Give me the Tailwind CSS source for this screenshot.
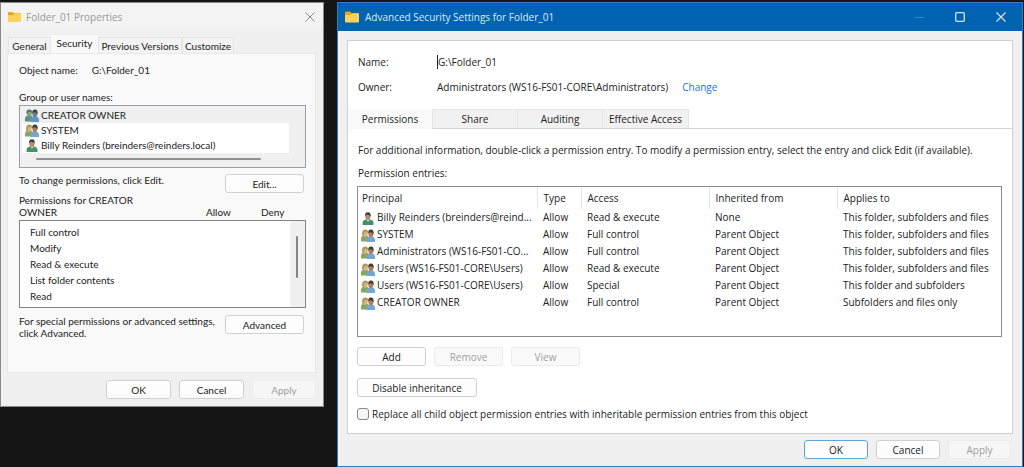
<!DOCTYPE html>
<html lang="en">
  <head>
    <meta charset="UTF-8" />
    <meta name="viewport" content="width=device-width, initial-scale=1.0" />
    <title>Advanced Security Settings for Folder_01</title>
    <script src="https://cdn.jsdelivr.net/npm/@tailwindcss/browser@4"></script>
  </head>
  <body class="bg-[#151515] min-h-screen text-[#222]">
    <!-- Shared icons -->
    <svg class="hidden">
      <symbol id="folder" viewBox="0 0 14 12">
        <path d="M0 1.5Q0 .5 1 .5H5L6.5 2H13Q14 2 14 3V6H0Z" fill="#e8a61e" />
        <path d="M0 4H5.2L6.8 2.6H13Q14 2.6 14 3.6V10.5Q14 11.5 13 11.5H1Q0 11.5 0 10.5Z" fill="#ffd35b" />
      </symbol>
      <symbol id="user" viewBox="0 0 12 13">
        <path d="M.6 13V10.5Q.8 8.3 4 7.6H8Q11.2 8.3 11.5 10.5V13Z" fill="#43906f" />
        <path d="M4.4 7.4 6 9.8 7.8 7.4Z" fill="#d8e8df" />
        <ellipse cx="5.9" cy="4.6" rx="2.6" ry="3.5" fill="#b98a68" />
        <path d="M3.2 4.4Q2.6.2 6 .2 9.3.4 8.6 4.4 7.5 2.6 5 2.8 3.8 3 3.2 4.4Z" fill="#33423b" />
      </symbol>
      <symbol id="users" viewBox="0 0 14 13">
        <path d="M0 12.4V9.2Q.2 7.2 2.6 6.8H6Q8 7.2 8 9.2V12.4Z" fill="#86a65c" />
        <ellipse cx="4.2" cy="4.4" rx="2.5" ry="3.4" fill="#d5b184" />
        <path d="M1.2 6.8Q.4.4 4.2.4 7.7.4 6.9 4.2 5.6 2.2 3.6 3 2.3 4 2.6 7Z" fill="#a39c5c" />
        <path d="M5.4 13V10.2Q5.8 8 8.4 7.4H11.4Q13.8 8 14 10.2V13Z" fill="#75a5d5" />
        <ellipse cx="9.9" cy="4.8" rx="2.5" ry="3.4" fill="#ad7d5c" />
        <path d="M7.3 4.7Q6.8.5 10 .5 13.2.6 12.5 5.2 11.2 3 9.2 3.2 8.1 3.4 7.3 4.7Z" fill="#443a36" />
      </symbol>
      <symbol id="owner" viewBox="0 0 14 13">
        <path d="M0 12.4V9.2Q.2 7.2 2.6 6.8H6Q8 7.2 8 9.2V12.4Z" fill="#559477" />
        <ellipse cx="4.2" cy="4.4" rx="2.5" ry="3.4" fill="#87a08a" />
        <path d="M1.5 5Q.7.4 4.2.4 7.7.4 6.9 4.2 5.6 2.2 3.6 3 2.3 3.5 1.5 5Z" fill="#52765f" />
        <path d="M5.4 13V10.2Q5.8 8 8.4 7.4H11.4Q13.8 8 14 10.2V13Z" fill="#5b96cc" />
        <ellipse cx="9.9" cy="4.8" rx="2.5" ry="3.4" fill="#6f7d88" />
        <path d="M7.3 4.7Q6.8.5 10 .5 13.2.6 12.5 5.2 11.2 3 9.2 3.2 8.1 3.4 7.3 4.7Z" fill="#2e4454" />
      </symbol>
    </svg>

    <main class="flex items-start gap-[13px] pt-[2px] pr-[1px]">
      <!-- Folder properties -->
      <section class="w-[324px] shrink-0 border border-[#8a8a8a] bg-[#f0f0f0] font-['Lato',sans-serif] text-[10px] leading-[12px]">
        <header class="flex h-[27px] items-center bg-[#f3f3f3] pl-[7px] pr-[8px]">
          <svg class="h-[12px] w-[13px]"><use href="#folder" /></svg>
          <h2 class="ml-[5px] flex-1 font-['Open_Sans',sans-serif] text-[10px] text-[#999]">Folder_01 Properties</h2>
          <button aria-label="Close" class="text-[#8a8a8a]">
            <svg class="h-[10px] w-[10px]" viewBox="0 0 10 10" fill="none" stroke="currentColor"><path d="M.5 .5 9.5 9.5M9.5 .5 .5 9.5" /></svg>
          </button>
        </header>

        <nav class="mt-[7px] flex h-[16px] items-end pl-[7px]">
          <button class="h-[16px] w-[43px] border border-b-0 border-[#e5e5e5] bg-[#f3f3f3]">General</button>
          <button class="h-[18px] w-[47px] bg-[#f9f9f9] pb-[3px]">Security</button>
          <button class="h-[16px] w-[84px] border border-b-0 border-[#e5e5e5] bg-[#f3f3f3]">Previous Versions</button>
          <button class="h-[16px] w-[52px] border border-b-0 border-[#e5e5e5] bg-[#f3f3f3]">Customize</button>
        </nav>

        <div class="ml-[6px] mr-[7px] h-[320px] border border-[#e8e8e8] bg-[#f9f9f9] pl-[11px] pr-[9px] pt-[10px]">
          <p class="flex gap-[14px]"><span>Object name:</span><span>G:\Folder_01</span></p>
          <p class="mt-[15px]">Group or user names:</p>
          <div class="mt-[2px] h-[63px] border border-[#9aa0a8] bg-[#f0f0f0] pl-[2px] pr-[16px] pt-[2px]">
            <ul class="bg-white leading-[15px]">
              <li class="flex items-center bg-[#f0f0f0] pl-[3px]"><svg class="mr-[2px] h-[13px] w-[14px]"><use href="#owner" /></svg>CREATOR OWNER</li>
              <li class="flex items-center pl-[3px]"><svg class="mr-[2px] h-[13px] w-[14px]"><use href="#users" /></svg>SYSTEM</li>
              <li class="flex items-center pl-[3px]"><svg class="mr-[2px] h-[13px] w-[14px]"><use href="#user" /></svg>Billy Reinders (breinders@reinders.local)</li>
            </ul>
            <div class="ml-[14px] mr-[28px] mt-[5px] h-[2px] rounded-full bg-[#909090]"></div>
          </div>
          <div class="mt-[6px] flex items-start justify-between pr-[2px]">
            <p>To change permissions, click Edit.</p>
            <button class="h-[19px] w-[79px] rounded-[3px] border border-[#d0d0d0] bg-[#fdfdfd]">Edit...</button>
          </div>
          <div class="mt-[1px] flex items-end">
            <p class="w-[187px]">Permissions for CREATOR<br />OWNER</p>
            <p class="w-[55px]">Allow</p>
            <p>Deny</p>
          </div>
          <div class="mt-[2px] flex h-[88px] justify-between border border-[#858585] bg-white">
            <ul class="pl-[10px] pt-[3px] leading-[16px]">
              <li>Full control</li>
              <li>Modify</li>
              <li>Read &amp; execute</li>
              <li>List folder contents</li>
              <li>Read</li>
            </ul>
            <div class="w-[15px] bg-[#f0f0f0] pl-[6px] pt-[15px]">
              <div class="h-[42px] w-[2px] rounded-full bg-[#858585]"></div>
            </div>
          </div>
          <div class="mt-[7px] flex items-start justify-between pr-[2px]">
            <p>For special permissions or advanced settings,<br />click Advanced.</p>
            <button class="h-[19px] w-[79px] shrink-0 rounded-[3px] border border-[#d0d0d0] bg-[#fdfdfd]">Advanced</button>
          </div>
        </div>

        <footer class="flex justify-end gap-[8px] pb-[7px] pr-[7px] pt-[7px]">
          <button class="h-[19px] w-[65px] rounded-[3px] border border-[#d0d0d0] bg-[#fdfdfd]">OK</button>
          <button class="h-[19px] w-[65px] rounded-[3px] border border-[#d0d0d0] bg-[#fdfdfd]">Cancel</button>
          <button disabled class="h-[19px] w-[64px] rounded-[3px] border border-[#ececec] bg-[#f6f6f6] text-[#a0a0a0]">Apply</button>
        </footer>
      </section>

      <!-- Advanced security settings -->
      <section class="min-w-0 flex-1 border border-[#2f7fc0] bg-[#f0f0f0] font-['Open_Sans',sans-serif] text-[10px] leading-[16px]">
        <header class="flex h-[28px] items-center bg-[#0063b1] pl-[7px] pr-[16px] text-white">
          <svg class="h-[12px] w-[14px]"><use href="#folder" /></svg>
          <h1 class="ml-[6px] flex-1 text-[#dbe9f5]">Advanced Security Settings for Folder_01</h1>
          <div class="flex items-center gap-[31px]">
            <button aria-label="Minimize" disabled class="text-[#3d88c6]"><svg class="h-[10px] w-[10px]" viewBox="0 0 10 10" stroke="currentColor"><path d="M.5 5.5H9.5" /></svg></button>
            <button aria-label="Maximize" class="text-[#d5e5f3]"><svg class="h-[10px] w-[10px]" viewBox="0 0 10 10" fill="none" stroke="currentColor"><rect x=".7" y=".7" width="8.6" height="8.6" rx="1" stroke-width="1.3" /></svg></button>
            <button aria-label="Close" class="text-[#d5e5f3]"><svg class="h-[10px] w-[10px]" viewBox="0 0 10 10" fill="none" stroke="currentColor"><path d="M.5 .5 9.5 9.5M9.5 .5 .5 9.5" stroke-width="1.2" /></svg></button>
          </div>
        </header>

        <div class="mx-[9px] mt-[9px] h-[394px] border border-[#cfcfcf] bg-white">
          <dl class="grid grid-cols-[79px_1fr] gap-y-[9px] pl-[10px] pt-[13px]">
            <dt>Name:</dt>
            <dd><span class="border-l border-[#222]">G:\Folder_01</span></dd>
            <dt>Owner:</dt>
            <dd>Administrators (WS16-FS01-CORE\Administrators)<a href="#" class="ml-[14px] text-[#1a73d6]">Change</a></dd>
          </dl>

          <nav class="mt-[14px] flex h-[20px] border-b border-[#d5d5d5]">
            <button class="h-[20px] w-[85px] border-r border-[#e5e5e5] bg-[#f9f9f9]">Permissions</button>
            <button class="w-[85px] border-r border-t border-[#e5e5e5] bg-[#f1f1f1]">Share</button>
            <button class="w-[85px] border-r border-t border-[#e5e5e5] bg-[#f1f1f1]">Auditing</button>
            <button class="w-[86px] border-r border-t border-[#e5e5e5] bg-[#f1f1f1]">Effective Access</button>
          </nav>

          <div class="pl-[9px] pr-[10px]">
            <p class="mt-[13px] pl-[1px]">For additional information, double-click a permission entry. To modify a permission entry, select the entry and click Edit (if available).</p>
            <p class="mt-[7px] pl-[1px]">Permission entries:</p>

            <div class="mt-[5px] h-[151px] border border-[#8c8c8c]">
              <table class="w-full table-fixed text-left leading-[17px]">
                <colgroup>
                  <col class="w-[179px]" />
                  <col class="w-[44px]" />
                  <col class="w-[128px]" />
                  <col class="w-[128px]" />
                  <col />
                </colgroup>
                <thead>
                  <tr class="h-[22px]">
                    <th class="border-r border-[#e5e5e5] pl-[4px] font-normal">Principal</th>
                    <th class="border-r border-[#e5e5e5] pl-[6px] font-normal">Type</th>
                    <th class="border-r border-[#e5e5e5] pl-[6px] font-normal">Access</th>
                    <th class="border-r border-[#e5e5e5] pl-[6px] font-normal">Inherited from</th>
                    <th class="pl-[6px] font-normal">Applies to</th>
                  </tr>
                </thead>
                <tbody>
                  <tr>
                    <td class="whitespace-nowrap pl-[3px]"><svg class="mr-[2px] inline h-[13px] w-[14px] align-middle"><use href="#user" /></svg>Billy Reinders (breinders@reind...</td>
                    <td class="pl-[6px]">Allow</td>
                    <td class="pl-[6px]">Read &amp; execute</td>
                    <td class="pl-[6px]">None</td>
                    <td class="pl-[6px]">This folder, subfolders and files</td>
                  </tr>
                  <tr>
                    <td class="whitespace-nowrap pl-[3px]"><svg class="mr-[2px] inline h-[13px] w-[14px] align-middle"><use href="#users" /></svg>SYSTEM</td>
                    <td class="pl-[6px]">Allow</td>
                    <td class="pl-[6px]">Full control</td>
                    <td class="pl-[6px]">Parent Object</td>
                    <td class="pl-[6px]">This folder, subfolders and files</td>
                  </tr>
                  <tr>
                    <td class="whitespace-nowrap pl-[3px]"><svg class="mr-[2px] inline h-[13px] w-[14px] align-middle"><use href="#users" /></svg>Administrators (WS16-FS01-CO...</td>
                    <td class="pl-[6px]">Allow</td>
                    <td class="pl-[6px]">Full control</td>
                    <td class="pl-[6px]">Parent Object</td>
                    <td class="pl-[6px]">This folder, subfolders and files</td>
                  </tr>
                  <tr>
                    <td class="whitespace-nowrap pl-[3px]"><svg class="mr-[2px] inline h-[13px] w-[14px] align-middle"><use href="#users" /></svg>Users (WS16-FS01-CORE\Users)</td>
                    <td class="pl-[6px]">Allow</td>
                    <td class="pl-[6px]">Read &amp; execute</td>
                    <td class="pl-[6px]">Parent Object</td>
                    <td class="pl-[6px]">This folder, subfolders and files</td>
                  </tr>
                  <tr>
                    <td class="whitespace-nowrap pl-[3px]"><svg class="mr-[2px] inline h-[13px] w-[14px] align-middle"><use href="#users" /></svg>Users (WS16-FS01-CORE\Users)</td>
                    <td class="pl-[6px]">Allow</td>
                    <td class="pl-[6px]">Special</td>
                    <td class="pl-[6px]">Parent Object</td>
                    <td class="pl-[6px]">This folder and subfolders</td>
                  </tr>
                  <tr>
                    <td class="whitespace-nowrap pl-[3px]"><svg class="mr-[2px] inline h-[13px] w-[14px] align-middle"><use href="#users" /></svg>CREATOR OWNER</td>
                    <td class="pl-[6px]">Allow</td>
                    <td class="pl-[6px]">Full control</td>
                    <td class="pl-[6px]">Parent Object</td>
                    <td class="pl-[6px]">Subfolders and files only</td>
                  </tr>
                </tbody>
              </table>
            </div>

            <div class="mt-[10px] flex gap-[8px]">
              <button class="h-[19px] w-[69px] rounded-[3px] border border-[#d0d0d0] bg-[#fdfdfd]">Add</button>
              <button disabled class="h-[19px] w-[69px] rounded-[3px] border border-[#ececec] bg-[#f9f9f9] text-[#a0a0a0]">Remove</button>
              <button disabled class="h-[19px] w-[69px] rounded-[3px] border border-[#ececec] bg-[#f9f9f9] text-[#a0a0a0]">View</button>
            </div>
            <button class="mt-[12px] block h-[19px] w-[120px] rounded-[3px] border border-[#d0d0d0] bg-[#fdfdfd]">Disable inheritance</button>
            <label class="mt-[9px] flex items-center gap-[3px]">
              <input type="checkbox" class="h-[12px] w-[12px] appearance-none rounded-[3px] border border-[#888] bg-[#f6f6f6]" />
              Replace all child object permission entries with inheritable permission entries from this object
            </label>
          </div>
        </div>

        <footer class="flex justify-end gap-[8px] pb-[7px] pr-[11px] pt-[6px]">
          <button class="h-[19px] w-[64px] rounded-[3px] border border-[#5aa5dc] bg-[#fdfdfd]">OK</button>
          <button class="h-[19px] w-[64px] rounded-[3px] border border-[#d0d0d0] bg-[#fdfdfd]">Cancel</button>
          <button disabled class="h-[19px] w-[63px] rounded-[3px] border border-[#ececec] bg-[#f6f6f6] text-[#a0a0a0]">Apply</button>
        </footer>
      </section>
    </main>
  </body>
</html>
